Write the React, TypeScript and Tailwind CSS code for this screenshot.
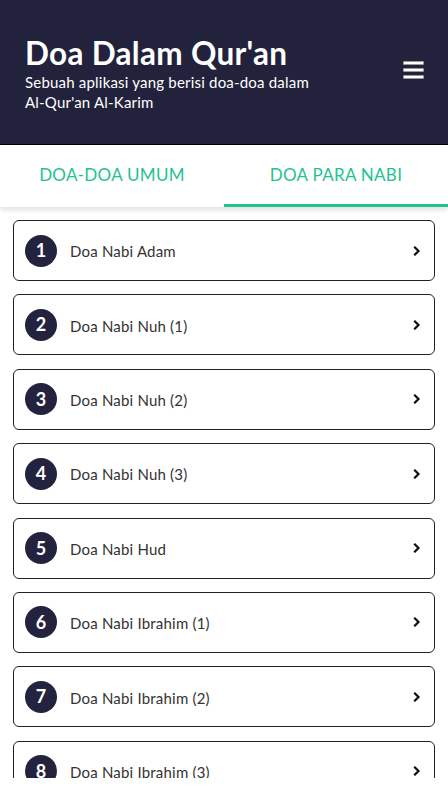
import React, { useState } from 'react';

const nabiList = [
  'Doa Nabi Adam',
  'Doa Nabi Nuh (1)',
  'Doa Nabi Nuh (2)',
  'Doa Nabi Nuh (3)',
  'Doa Nabi Hud',
  'Doa Nabi Ibrahim (1)',
  'Doa Nabi Ibrahim (2)',
  'Doa Nabi Ibrahim (3)',
];

const font = { fontFamily: '"Lato", "Noto Sans", sans-serif' };

const Chevron = () => (
  <svg width="10" height="10" viewBox="0 0 10 10" fill="none" stroke="#111" strokeWidth="2.2" strokeLinecap="square">
    <path d="M3 1.5 6.5 5 3 8.5" />
  </svg>
);

export default function App() {
  const [tab, setTab] = useState(1);

  return (
    <div className="w-[448px] h-[800px] bg-white flex flex-col overflow-hidden" style={font}>
      {/* Header */}
      <div className="h-[145px] shrink-0 bg-[#22223c] border-b border-black flex items-center justify-between pl-[25px] pr-[24px]">
        <div className="flex flex-col pt-[1px]">
          <h1 className="text-white text-[31.5px] font-bold leading-[38px] tracking-[0.3px]">Doa Dalam Qur'an</h1>
          <p className="text-white text-[15px] leading-[20px] tracking-[0.2px]">
            Sebuah aplikasi yang berisi doa-doa dalam
            <br />
            Al-Qur'an Al-Karim
          </p>
        </div>
        <button className="flex flex-col gap-[3px] mb-[4px]" aria-label="Menu">
          <span className="block w-[21px] h-[4px] bg-white rounded-[1px] border border-black/40" />
          <span className="block w-[21px] h-[4px] bg-white rounded-[1px] border border-black/40" />
          <span className="block w-[21px] h-[4px] bg-white rounded-[1px] border border-black/40" />
        </button>
      </div>

      {/* Tabs */}
      <div className="h-[62px] shrink-0 flex bg-white shadow-[0_3px_5px_rgba(0,0,0,0.12)] relative z-10">
        {['DOA-DOA UMUM', 'DOA PARA NABI'].map((t, i) => (
          <button
            key={t}
            onClick={() => setTab(i)}
            className={`flex-1 flex items-center justify-center text-[17px] tracking-[0.3px] text-[#1fc38f] border-b-[3px] ${
              tab === i ? 'border-[#1fc38f]' : 'border-transparent'
            }`}
          >
            {t}
          </button>
        ))}
      </div>

      {/* List */}
      <div className="h-[571px] shrink-0 overflow-hidden px-[13px] pt-[13px] flex flex-col gap-[13.4px]">
        {nabiList.map((name, i) => (
          <div
            key={name}
            className="h-[61px] shrink-0 border border-[#222] rounded-[6px] flex items-center pl-[11px] pr-[12px]"
          >
            <div className="w-[32px] h-[32px] rounded-full bg-[#23233f] text-white flex items-center justify-center text-[18px] font-bold">
              {i + 1}
            </div>
            <span className="ml-[13px] pt-[2px] text-[15px] tracking-[0.2px] text-[#333] flex-1">{name}</span>
            <Chevron />
          </div>
        ))}
      </div>
    </div>
  );
}
